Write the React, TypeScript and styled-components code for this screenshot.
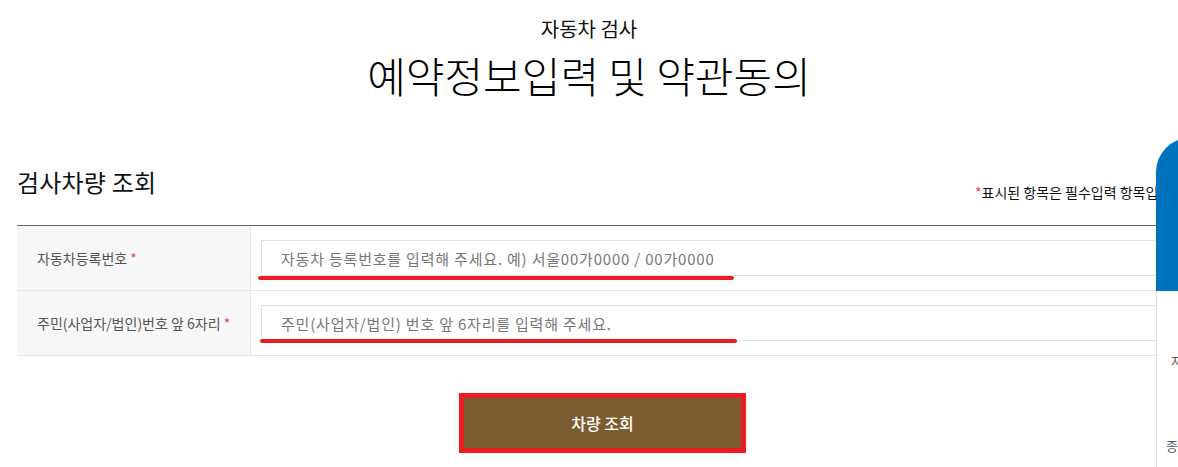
import React from "react";
import styled, { createGlobalStyle } from "styled-components";

const Global = createGlobalStyle`
  html, body { margin: 0; padding: 0; background: #fff; overflow: hidden; }
  body { font-family: "Noto Sans CJK KR", "Noto Sans", sans-serif; color: #222; }
  * { box-sizing: border-box; }
`;

const Page = styled.div`
  width: 1178px;
  height: 467px;
  position: relative;
  overflow: hidden;
`;

const Header = styled.header`
  display: flex;
  flex-direction: column;
  align-items: center;
  padding-top: 14px;
`;

const SubTitle = styled.div`
  font-size: 20px;
  line-height: 30px;
  color: #111;
`;

const MainTitle = styled.h1`
  margin: 6px 0 0;
  font-size: 42px;
  font-weight: 300;
  line-height: 50px;
  color: #000;
`;

const Section = styled.section`
  margin: 65px -10px 0 17px;
`;

const SectionHead = styled.div`
  display: flex;
  justify-content: space-between;
  align-items: flex-end;
  padding-bottom: 26px;
`;

const SectionTitle = styled.h2`
  margin: 0;
  font-size: 24px;
  font-weight: 400;
  color: #111;
  line-height: 34px;
  letter-spacing: 0.2px;
`;

const Note = styled.p`
  margin: 0 0 -3px;
  font-size: 14px;
  color: #111;
  line-height: 20px;
`;

const Star = styled.span`
  color: #e8425a;
`;

const Table = styled.div`
  border-top: 1px solid #666;
`;

const Row = styled.div`
  display: grid;
  grid-template-columns: 234px 1fr;
  border-bottom: 1px solid #e5e5e5;
  height: 65px;
`;

const Label = styled.div`
  background: #f7f7f7;
  border-right: 1px solid #e5e5e5;
  display: flex;
  align-items: center;
  padding-left: 20px;
  font-size: 14px;
  color: #555;
`;

const Cell = styled.div`
  position: relative;
  padding: 14px 0 0 10px;
`;

const Input = styled.input`
  display: block;
  width: 100%;
  height: 36px;
  border: 1px solid #e2e2e2;
  padding: 0 0 0 19px;
  font-family: "Noto Sans CJK KR", sans-serif;
  font-size: 15px;
  letter-spacing: 0.8px;
  outline: none;
  &::placeholder { color: #777; }
`;

const Mark = styled.div<{ $left: number; $top: number; $width: number }>`
  position: absolute;
  left: ${(p) => p.$left}px;
  top: ${(p) => p.$top}px;
  width: ${(p) => p.$width}px;
  height: 4px;
  border-radius: 2px;
  background: #ed1c24;
`;

const Actions = styled.div`
  display: flex;
  justify-content: center;
  padding-top: 37px;
`;

const Button = styled.button`
  width: 287px;
  height: 60px;
  border: 5px solid #ed1c24;
  background: #7d5c30;
  color: #fff;
  font-family: "Noto Sans CJK KR", sans-serif;
  font-size: 16px;
  font-weight: 500;
  cursor: pointer;
  margin-left: 27px;
`;

const QuickMenu = styled.aside`
  position: absolute;
  left: 1156px;
  top: 138px;
  width: 110px;
  height: 340px;
  display: flex;
  flex-direction: column;
`;

const QuickHead = styled.div`
  height: 153px;
  background: #0073bf;
  border-radius: 34px 0 0 0;
`;

const QuickBody = styled.div`
  flex: 1;
  border-left: 1px solid #dcdcdc;
  background: #fff;
  display: flex;
  flex-direction: column;
  padding-top: 60px;
  gap: 66px;
`;

const QuickItem = styled.div<{ $indent: number }>`
  font-size: 13px;
  color: #555;
  padding-left: ${(p) => p.$indent}px;
  white-space: nowrap;
`;

export default function App() {
  return (
    <Page>
      <Global />
      <Header>
        <SubTitle>자동차 검사</SubTitle>
        <MainTitle>예약정보입력 및 약관동의</MainTitle>
      </Header>
      <Section>
        <SectionHead>
          <SectionTitle>검사차량 조회</SectionTitle>
          <Note>
            <Star>*</Star>표시된 항목은 필수입력 항목입니다.
          </Note>
        </SectionHead>
        <Table>
          <Row>
            <Label>
              자동차등록번호&nbsp;<Star>*</Star>
            </Label>
            <Cell>
              <Input placeholder="자동차 등록번호를 입력해 주세요. 예) 서울00가0000 / 00가0000" />
              <Mark $left={7} $top={50} $width={476} />
            </Cell>
          </Row>
          <Row>
            <Label>
              주민(사업자/법인)번호 앞 6자리&nbsp;<Star>*</Star>
            </Label>
            <Cell>
              <Input placeholder="주민(사업자/법인) 번호 앞 6자리를 입력해 주세요." />
              <Mark $left={9} $top={48} $width={477} />
            </Cell>
          </Row>
        </Table>
      </Section>
      <Actions>
        <Button>차량 조회</Button>
      </Actions>
      <QuickMenu>
        <QuickHead />
        <QuickBody>
          <QuickItem $indent={14}>자동차</QuickItem>
          <QuickItem $indent={9}>종합</QuickItem>
        </QuickBody>
      </QuickMenu>
    </Page>
  );
}
